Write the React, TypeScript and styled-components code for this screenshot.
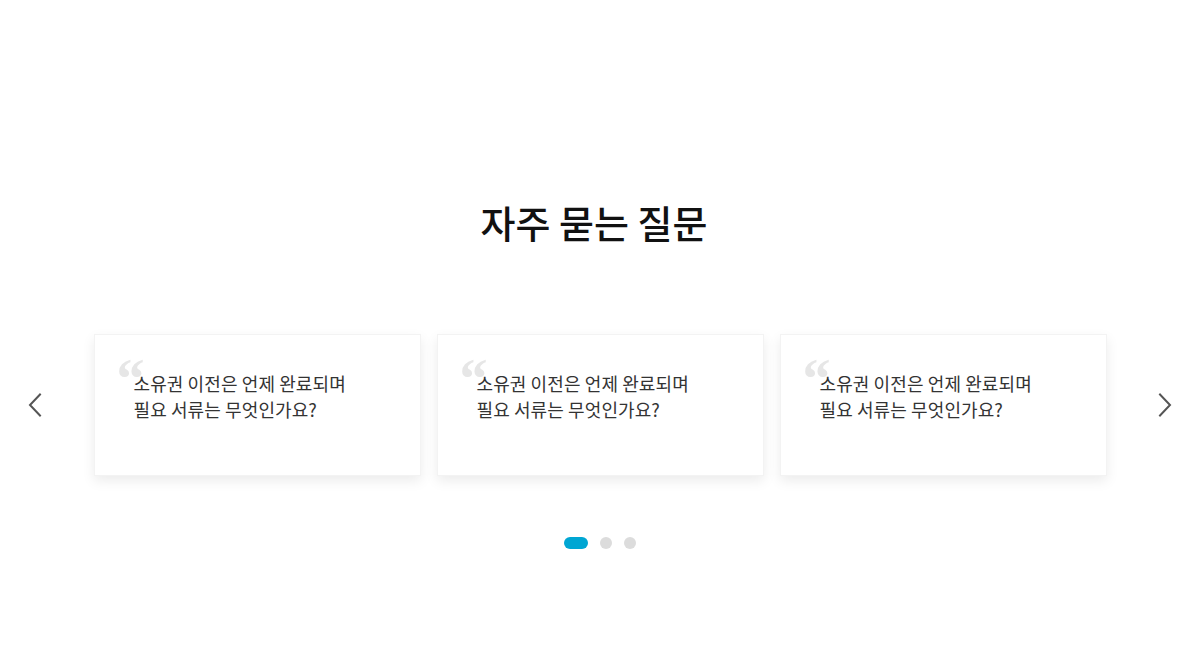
import React from "react";
import styled, { createGlobalStyle } from "styled-components";

const Global = createGlobalStyle`
  html, body { margin: 0; padding: 0; background: #fff; }
  body { font-family: "Noto Sans CJK KR", "Noto Sans", sans-serif; }
`;

const Section = styled.section`
  width: 1200px;
  height: 665px;
  padding-top: 195px;
  box-sizing: border-box;
  display: flex;
  flex-direction: column;
  align-items: center;
`;

const Title = styled.h2`
  margin: 0 12px 0 0;
  font-size: 38px;
  line-height: 54px;
  font-weight: 500;
  color: #111;
  letter-spacing: 0;
`;

const Carousel = styled.div`
  margin-top: 85px;
  width: 100%;
  box-sizing: border-box;
  padding: 0 23px;
  display: flex;
  align-items: center;
  justify-content: space-between;
`;

const Arrow = styled.button`
  width: 24px;
  height: 40px;
  padding: 0;
  border: 0;
  background: transparent;
  display: flex;
  align-items: center;
  justify-content: center;
  cursor: pointer;
`;

const Track = styled.div`
  width: 1013px;
  display: flex;
  gap: 16px;
`;

const Card = styled.div`
  position: relative;
  width: 327px;
  height: 142px;
  box-sizing: border-box;
  padding: 35px 30px 0 39px;
  background: #fff;
  border: 1px solid #f3f3f3;
  box-shadow: 0 5px 12px rgba(0, 0, 0, 0.08);

  &::before {
    content: "“";
    position: absolute;
    left: 22px;
    top: 16px;
    font-family: "Liberation Serif", serif;
    font-weight: 700;
    font-size: 56px;
    line-height: 56px;
    color: #e6e6e6;
  }
`;

const Question = styled.p`
  position: relative;
  margin: 0;
  font-size: 18px;
  line-height: 26px;
  font-weight: 400;
  color: #333;
  letter-spacing: 0.1px;
`;

const Dots = styled.div`
  margin-top: 61px;
  display: flex;
  gap: 12px;
  align-items: center;
`;

const Dot = styled.span<{ $active?: boolean }>`
  display: block;
  width: ${(p) => (p.$active ? "24px" : "12px")};
  height: 12px;
  border-radius: 6px;
  background: ${(p) => (p.$active ? "#00a6d3" : "#dcdcdc")};
`;

const Chevron = ({ dir }: { dir: "left" | "right" }) => (
  <svg width="14" height="24" viewBox="0 0 14 24" fill="none">
    <polyline
      points={dir === "left" ? "12,1.5 2,12 12,22.5" : "2,1.5 12,12 2,22.5"}
      stroke="#555"
      strokeWidth="2"
      strokeLinecap="square"
      fill="none"
    />
  </svg>
);

const faqs = [0, 1, 2];

export default function App() {
  return (
    <>
      <Global />
      <Section>
        <Title>자주 묻는 질문</Title>
        <Carousel>
          <Arrow aria-label="이전">
            <Chevron dir="left" />
          </Arrow>
          <Track>
            {faqs.map((i) => (
              <Card key={i}>
                <Question>
                  소유권 이전은 언제 완료되며
                  <br />
                  필요 서류는 무엇인가요?
                </Question>
              </Card>
            ))}
          </Track>
          <Arrow aria-label="다음">
            <Chevron dir="right" />
          </Arrow>
        </Carousel>
        <Dots>
          <Dot $active />
          <Dot />
          <Dot />
        </Dots>
      </Section>
    </>
  );
}
